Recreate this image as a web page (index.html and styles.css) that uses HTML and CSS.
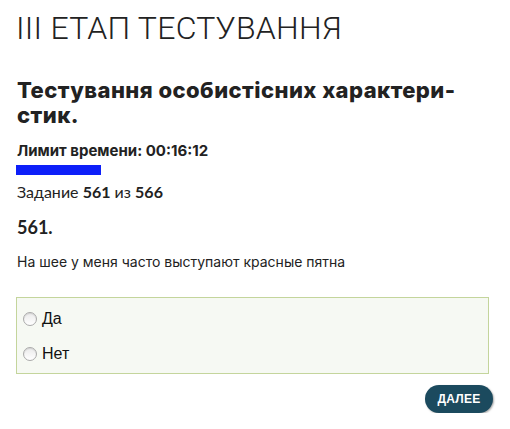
FILE: index.html
```html
<!DOCTYPE html>
<html lang="uk">
<head>
<meta charset="utf-8">
<link rel="stylesheet" href="styles.css">
</head>
<body>
<div class="page">
  <h1 class="stage">III ЕТАП ТЕСТУВАННЯ</h1>
  <h2 class="test-title">Тестування особистісних характери-<br>стик.</h2>
  <div class="timer">Лимит времени: 00:16:12</div>
  <div class="progress"></div>
  <div class="counter">Задание <b>561</b> из <b>566</b></div>
  <div class="qnum">561.</div>
  <p class="question">На шее у меня часто выступают красные пятна</p>
  <div class="answers">
    <label class="answer"><span class="radio"></span>Да</label>
    <label class="answer"><span class="radio"></span>Нет</label>
  </div>
  <div class="actions">
    <button class="next">ДАЛЕЕ</button>
  </div>
</div>
</body>
</html>
```
FILE: styles.css
```css
html, body {
  margin: 0;
  padding: 0;
  background: #ffffff;
}
.page {
  width: 473px;
  margin-left: 16px;
  color: #222;
  font-family: "Inter", "Liberation Sans", sans-serif;
}
.stage {
  margin: 0;
  padding-top: 9px;
  font-family: "Roboto", "Liberation Sans", sans-serif;
  font-weight: 300;
  font-size: 32px;
  line-height: 38px;
  letter-spacing: 0.25px;
  color: #222;
}
.test-title {
  margin: 31px 0 0 1px;
  font-size: 22px;
  line-height: 25px;
  font-weight: 800;
  letter-spacing: 0.45px;
  color: #222;
}
.timer {
  margin: 14px 0 0 1px;
  font-size: 15px;
  line-height: 18px;
  font-weight: 700;
}
.progress {
  width: 85px;
  height: 10px;
  background: #0d1ff9;
  margin-top: 5px;
}
.counter {
  margin-top: 7px;
  margin-left: 1px;
  font-family: "Lato", sans-serif;
  font-size: 16px;
  line-height: 20px;
}
.counter b { font-weight: 700; }
.qnum {
  margin-top: 14px;
  margin-left: 1px;
  font-family: "Lato", sans-serif;
  font-weight: 700;
  font-size: 18px;
  line-height: 22px;
}
.question {
  margin: 14px 0 0 1px;
  font-size: 14px;
  line-height: 20px;
}
.answers {
  margin-top: 25px;
  border: 1px solid #c4d59c;
  background: #f6f9f3;
  padding: 10px 6px 9px;
  display: flex;
  flex-direction: column;
  gap: 14px;
}
.answer {
  display: flex;
  align-items: center;
  gap: 5px;
  font-family: "Liberation Sans", sans-serif;
  font-size: 16px;
  line-height: 21px;
  color: #111;
}
.radio {
  width: 14px;
  height: 14px;
  border-radius: 50%;
  border: 1px solid #aaaaaa;
  background: linear-gradient(#eaeaea, #ffffff);
  box-sizing: border-box;
  box-shadow: inset 0 1px 1px rgba(0,0,0,0.1);
}
.actions {
  display: flex;
  justify-content: flex-end;
  margin-top: 11px;
  margin-right: -4px;
}
.next {
  width: 68px;
  height: 28px;
  border: none;
  border-radius: 14px;
  background: #1b4a5e;
  color: #fff;
  font-family: "Liberation Sans", sans-serif;
  font-weight: 700;
  font-size: 12px;
  letter-spacing: 0.2px;
  padding: 0;
  box-shadow: 1px 1px 2px rgba(0,0,0,0.35);
}
```
